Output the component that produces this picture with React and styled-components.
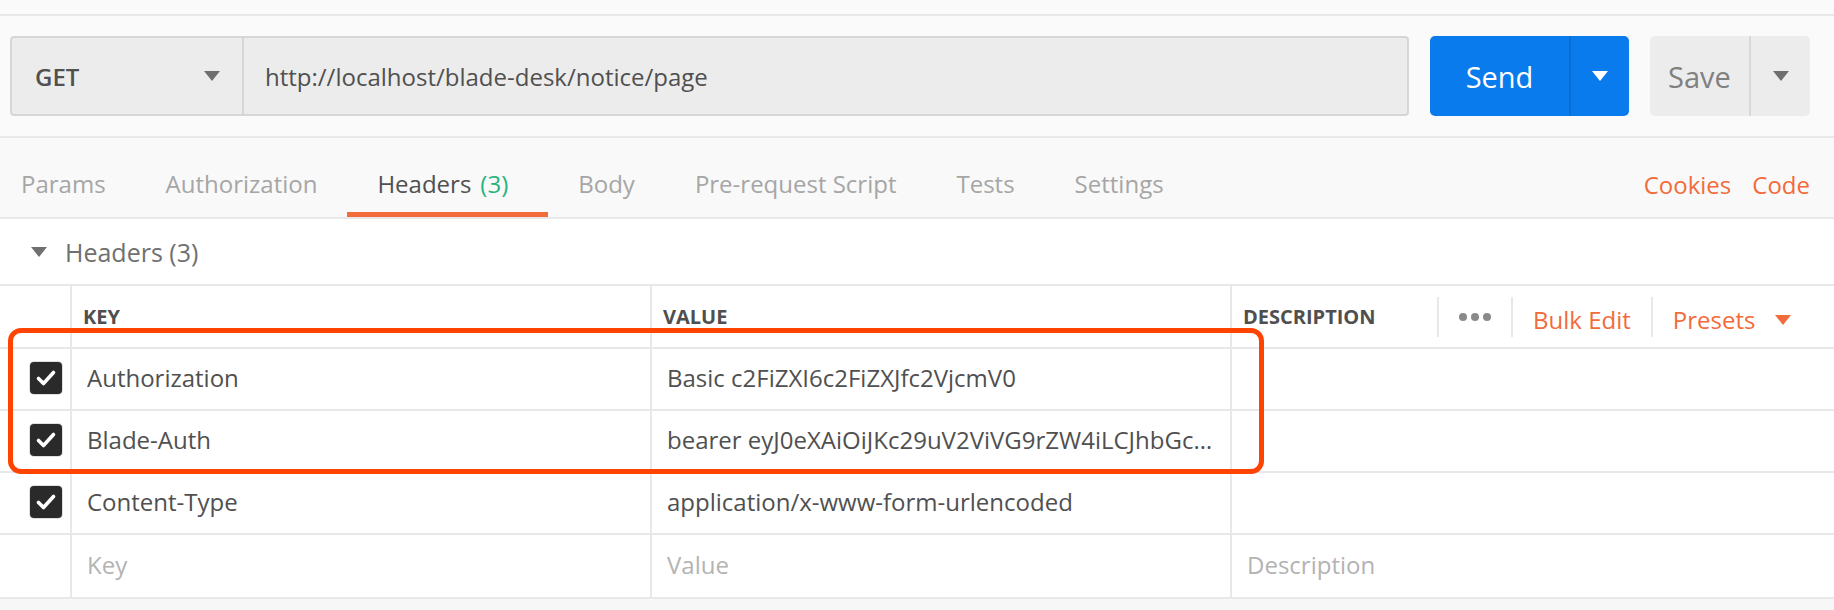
import React from "react";
import styled, { createGlobalStyle } from "styled-components";

const GlobalStyle = createGlobalStyle`
  html, body {
    margin: 0;
    padding: 0;
    background: #f7f7f7;
  }
  body {
    font-family: "Open Sans", "Liberation Sans", sans-serif;
    color: #505050;
  }
  * {
    box-sizing: border-box;
  }
`;

const ORANGE = "#f26b3a";
const LINE = "#e8e8e8";

const Page = styled.div`
  width: 1834px;
  height: 610px;
  overflow: hidden;
  position: relative;
  background: #f7f7f7;
`;

const TopStrip = styled.div`
  height: 16px;
  background: #fafafa;
  border-bottom: 2px solid ${LINE};
`;

const Toolbar = styled.div`
  display: flex;
  align-items: center;
  gap: 21px;
  padding: 20px 24px 20px 10px;
  background: #fafafa;
  border-bottom: 2px solid ${LINE};
`;

const UrlGroup = styled.div`
  flex: 1;
  display: flex;
  height: 80px;
  background: #ececec;
  border: 2px solid #d6d6d6;
  border-radius: 4px;
`;

const Method = styled.div`
  width: 232px;
  display: flex;
  align-items: center;
  justify-content: space-between;
  padding: 0 22px 0 23px;
  border-right: 2px solid #d6d6d6;
  font-size: 24px;
  font-weight: 600;
  color: #505050;
`;

const UrlText = styled.div`
  display: flex;
  align-items: center;
  padding-left: 21px;
  font-size: 24px;
  color: #505050;
`;

const Caret = styled.span`
  width: 0;
  height: 0;
  border-left: ${(p) => p.size || 8}px solid transparent;
  border-right: ${(p) => p.size || 8}px solid transparent;
  border-top: ${(p) => Math.round((p.size || 8) * 1.25)}px solid ${(p) => p.color};
  display: inline-block;
`;

const SplitButton = styled.div`
  display: flex;
  height: 80px;
  width: ${(p) => p.width}px;
  border-radius: 5px;
  background: ${(p) => (p.primary ? "#097bed" : "#ececec")};
  color: ${(p) => (p.primary ? "#ffffff" : "#808080")};
`;

const ButtonMain = styled.div`
  flex: 1;
  display: flex;
  align-items: center;
  justify-content: center;
  font-size: 29px;
  font-weight: 500;
`;

const ButtonArrow = styled.div`
  width: ${(p) => p.width}px;
  display: flex;
  align-items: center;
  justify-content: center;
  border-left: 2px solid ${(p) => (p.primary ? "#0a6ed2" : "#d8d8d8")};
`;

const TabBar = styled.div`
  display: flex;
  height: 81px;
  padding-top: 12px;
  background: #f9f9f9;
  border-bottom: 2px solid ${LINE};
`;

const Tab = styled.div`
  position: relative;
  display: flex;
  align-items: center;
  padding: 0 30px;
  font-size: 24px;
  color: ${(p) => (p.active ? "#505050" : "#a6a6a6")};

  &:first-child {
    padding-left: 21px;
  }

  &::after {
    content: "";
    display: ${(p) => (p.active ? "block" : "none")};
    position: absolute;
    left: 0;
    right: 0;
    bottom: 0;
    height: 5px;
    background: ${ORANGE};
  }
`;

const Count = styled.span`
  color: #26b47f;
  margin-left: 9px;
  margin-right: 10px;
`;

const TabLinks = styled.div`
  margin-left: auto;
  display: flex;
  align-items: center;
  gap: 21px;
  padding-right: 24px;
  padding-top: 2px;
`;

const OrangeLink = styled.span`
  font-size: 24px;
  color: ${ORANGE};
`;

const Content = styled.div`
  position: relative;
  background: #ffffff;
`;

const SectionTitle = styled.div`
  height: 65px;
  display: flex;
  align-items: center;
  gap: 18px;
  padding-left: 31px;
  font-size: 25px;
  color: #707070;
`;

const Table = styled.div`
  border-top: 2px solid ${LINE};
  border-bottom: 2px solid ${LINE};
`;

const Row = styled.div`
  display: grid;
  grid-template-columns: 72px 580px 580px 1fr;
  height: ${(p) => (p.head ? 63 : 62)}px;
  border-bottom: ${(p) => (p.last ? "none" : `2px solid ${LINE}`)};
`;

const Cell = styled.div`
  display: flex;
  align-items: center;
  min-width: 0;
  padding-left: ${(p) => (p.head ? 11 : 15)}px;
  padding-bottom: ${(p) => (p.head ? 0 : 4)}px;
  border-right: ${(p) => (p.edge ? "none" : `2px solid ${LINE}`)};
  font-size: ${(p) => (p.head ? 20 : 24)}px;
  font-weight: ${(p) => (p.head ? 700 : 400)};
  color: ${(p) => (p.placeholder ? "#b3b3b3" : p.head ? "#4f4f4f" : "#505050")};
`;

const CheckCell = styled(Cell)`
  padding-left: 30px;
  padding-bottom: 2px;
`;

const CellText = styled.span`
  white-space: nowrap;
  overflow: hidden;
  text-overflow: ellipsis;
  padding-right: 16px;
`;

const CheckBox = styled.span`
  width: 32px;
  height: 32px;
  border-radius: 4px;
  background: #2a2a2a;
  box-shadow: 0 0 0 1px #e0e0e0;
  display: flex;
  align-items: center;
  justify-content: center;
`;

const DescLabel = styled.span`
  width: 194px;
`;

const Action = styled.div`
  display: flex;
  align-items: center;
  gap: 20px;
  height: 40px;
  padding: ${(p) => (p.low ? "6px 20px 0" : "0 20px")};
  border-left: 2px solid ${LINE};
  font-size: 24px;
  font-weight: 400;
  color: ${ORANGE};
`;

const Dots = styled.div`
  display: flex;
  gap: 4px;
`;

const Dot = styled.span`
  width: 8px;
  height: 8px;
  border-radius: 50%;
  background: #8a8a8a;
`;

const Highlight = styled.div`
  position: absolute;
  left: 8px;
  top: 109px;
  width: 1256px;
  height: 146px;
  border: 5px solid #ff4300;
  border-radius: 13px;
  pointer-events: none;
`;

const Check = () => (
  <CheckBox>
    <svg width="24" height="24" viewBox="0 0 24 24">
      <polyline
        points="4.5,12.5 9.5,17.5 19.5,6.5"
        fill="none"
        stroke="#ffffff"
        strokeWidth="3.6"
        strokeLinecap="round"
        strokeLinejoin="round"
      />
    </svg>
  </CheckBox>
);

const headers = [
  { key: "Authorization", value: "Basic c2FiZXI6c2FiZXJfc2VjcmV0" },
  {
    key: "Blade-Auth",
    value: "bearer eyJ0eXAiOiJKc29uV2ViVG9rZW4iLCJhbGc\u2026",
  },
  { key: "Content-Type", value: "application/x-www-form-urlencoded" },
];

const tabs = ["Params", "Authorization", "Headers", "Body", "Pre-request Script", "Tests", "Settings"];

const App = () => {
  return (
    <Page>
      <GlobalStyle />
      <TopStrip />
      <Toolbar>
        <UrlGroup>
          <Method>
            GET
            <Caret color="#6f6f6f" />
          </Method>
          <UrlText>http://localhost/blade-desk/notice/page</UrlText>
        </UrlGroup>
        <SplitButton primary width={199}>
          <ButtonMain>Send</ButtonMain>
          <ButtonArrow primary width={60}>
            <Caret color="#ffffff" />
          </ButtonArrow>
        </SplitButton>
        <SplitButton width={160}>
          <ButtonMain>Save</ButtonMain>
          <ButtonArrow width={61}>
            <Caret color="#6f6f6f" />
          </ButtonArrow>
        </SplitButton>
      </Toolbar>

      <TabBar>
        {tabs.map((t) =>
          t === "Headers" ? (
            <Tab key={t} active>
              Headers<Count>(3)</Count>
            </Tab>
          ) : (
            <Tab key={t}>{t}</Tab>
          )
        )}
        <TabLinks>
          <OrangeLink>Cookies</OrangeLink>
          <OrangeLink>Code</OrangeLink>
        </TabLinks>
      </TabBar>

      <Content>
        <SectionTitle>
          <Caret color="#707070" />
          Headers (3)
        </SectionTitle>
        <Table>
          <Row head>
            <Cell head />
            <Cell head>KEY</Cell>
            <Cell head>VALUE</Cell>
            <Cell head edge>
              <DescLabel>DESCRIPTION</DescLabel>
              <Action>
                <Dots>
                  <Dot />
                  <Dot />
                  <Dot />
                </Dots>
              </Action>
              <Action low>Bulk Edit</Action>
              <Action low>
                Presets
                <Caret color={ORANGE} />
              </Action>
            </Cell>
          </Row>
          {headers.map((h) => (
            <Row key={h.key}>
              <CheckCell>
                <Check />
              </CheckCell>
              <Cell>
                <CellText>{h.key}</CellText>
              </Cell>
              <Cell>
                <CellText>{h.value}</CellText>
              </Cell>
              <Cell edge />
            </Row>
          ))}
          <Row last>
            <Cell />
            <Cell placeholder>Key</Cell>
            <Cell placeholder>Value</Cell>
            <Cell placeholder edge>
              Description
            </Cell>
          </Row>
        </Table>
        <Highlight />
      </Content>
    </Page>
  );
};

export default App;
